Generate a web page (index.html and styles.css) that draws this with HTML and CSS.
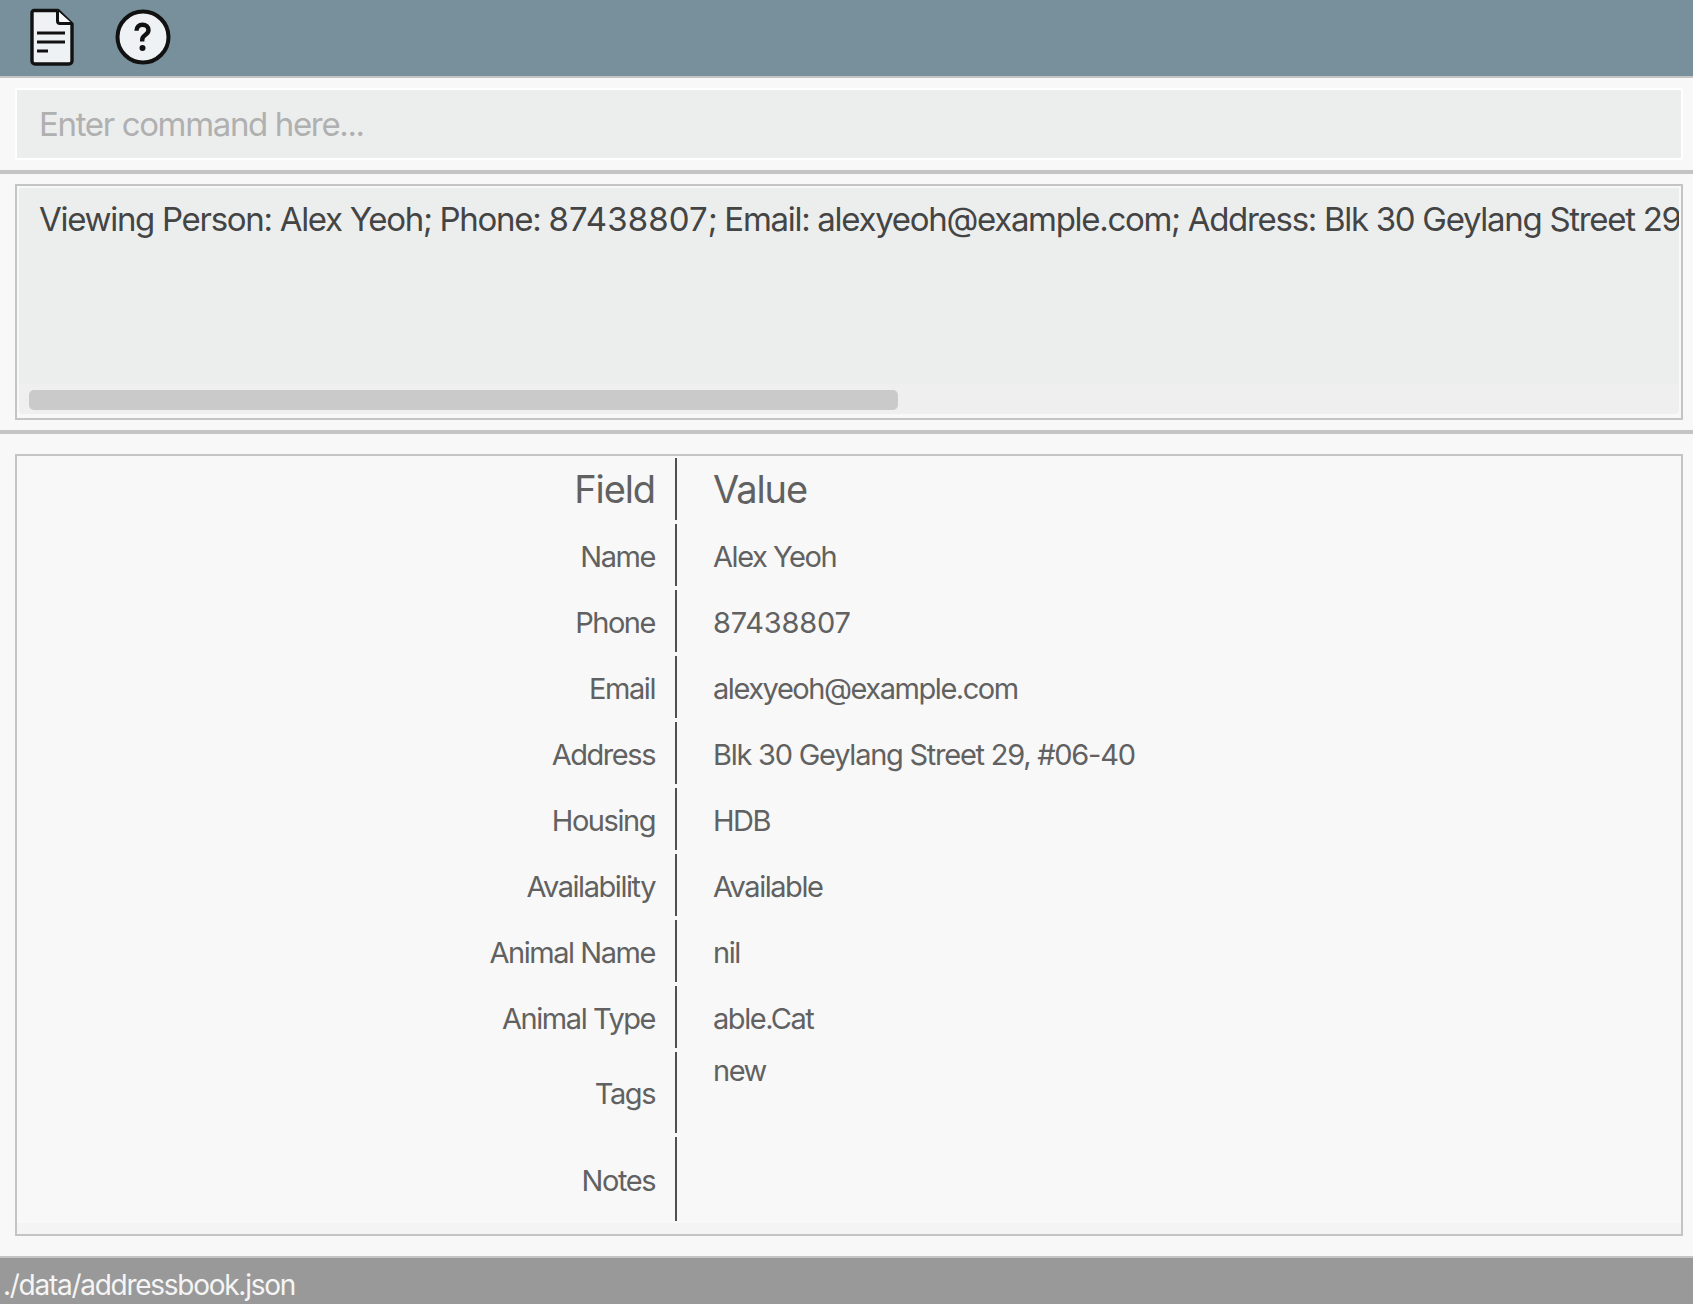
FILE: index.html
```html
<!DOCTYPE html>
<html lang="en">
<head>
<meta charset="utf-8">
<title>Address Book</title>
<link rel="stylesheet" href="styles.css">
</head>
<body>
<div class="app">
  <header class="toolbar">
    <svg class="icon-file" viewBox="0 0 44 58" width="44" height="58">
      <path d="M4 2.500H28L42 16V53a3 3 0 0 1-3 3H5a3 3 0 0 1-3-3V4.500a2 2 0 0 1 2-2Z" fill="#eff2f5" stroke="#111" stroke-width="3.400" stroke-linejoin="round"/>
      <path d="M27.500 2.500V13a2.500 2.500 0 0 0 2.500 2.500H42" fill="#fafbfc" stroke="#111" stroke-width="3"/>
      <path d="M7 25H35M7 34H35M7 43H18" fill="none" stroke="#111" stroke-width="2.800"/>
    </svg>
    <svg class="icon-help" viewBox="0 0 56 56" width="56" height="56">
      <circle cx="28" cy="28" r="25.500" fill="#eff2f5" stroke="#111" stroke-width="4"/>
      <path d="M21.500 21.800c0-4 2.500-6 6-6 3.500 0 6 2.200 6 5.200 0 2.600-1.500 3.800-3.300 5-2 1.400-3 2.500-3 5v1.500" fill="none" stroke="#111" stroke-width="4.400"/>
      <circle cx="27.500" cy="39" r="3" fill="#111"/>
    </svg>
  </header>

  <section class="command-pane">
    <div class="command-box">Enter command here...</div>
  </section>

  <section class="result-pane">
    <div class="result-box">
      <div class="result-text">Viewing Person: Alex Yeoh; Phone: <span class="digits">87438807</span>; Email: alexyeoh@example.com; Address: Blk 30 Geylang Street 29, #06-40; Housing: HDB; Availability: Available; Animal Name: nil</div>
      <div class="scroll-track"><div class="scroll-thumb"></div></div>
    </div>
  </section>

  <main class="detail-pane">
    <div class="detail-box">
      <div class="detail-rows">
        <div class="row row-head"><div class="field">Field</div><div class="value">Value</div></div>
        <div class="row"><div class="field">Name</div><div class="value">Alex Yeoh</div></div>
        <div class="row"><div class="field">Phone</div><div class="value value-digits">87438807</div></div>
        <div class="row"><div class="field">Email</div><div class="value">alexyeoh@example.com</div></div>
        <div class="row"><div class="field">Address</div><div class="value value-address">Blk 30 Geylang Street 29, #06-40</div></div>
        <div class="row"><div class="field">Housing</div><div class="value">HDB</div></div>
        <div class="row"><div class="field">Availability</div><div class="value">Available</div></div>
        <div class="row"><div class="field">Animal Name</div><div class="value">nil</div></div>
        <div class="row"><div class="field">Animal Type</div><div class="value">able.Cat</div></div>
        <div class="row row-tags"><div class="field">Tags</div><div class="value value-top">new</div></div>
        <div class="row row-notes"><div class="field">Notes</div><div class="value"></div></div>
      </div>
      <div class="detail-foot"></div>
    </div>
  </main>

  <footer class="status">./data/addressbook.json</footer>
</div>
</body>
</html>
```

FILE: styles.css
```css
* { box-sizing: border-box; }
html, body { margin: 0; height: 100%; }
body {
  background: #f8f8f8;
  font-family: Inter, "Liberation Sans", sans-serif;
  overflow: hidden;
}
.app { display: flex; flex-direction: column; height: 1304px; }

.toolbar {
  height: 78px;
  background: #78909c;
  border-bottom: 2px solid #c4c4c4;
  display: flex;
  align-items: flex-start;
  gap: 41px;
  padding: 8px 0 0 30px;
}
.icon-help { margin-top: 1px; }

.command-pane {
  height: 96px;
  padding: 10px 10px 0 15px;
  border-bottom: 4px solid #c4c4c4;
}
.command-box {
  height: 72px;
  background: #eceeee;
  border: 2px solid #fff;
  padding: 0 0 0 22px;
  display: flex;
  align-items: center;
  color: #b0b0b0;
  font-size: 33px;
  letter-spacing: -1.35px;
}

.result-pane {
  height: 260px;
  padding: 10px 10px 0 15px;
  border-bottom: 4px solid #c4c4c4;
}
.result-box {
  height: 236px;
  border: 2px solid #c4c4c4;
  padding: 2px 2px 4px;
  display: flex;
  flex-direction: column;
}
.result-text {
  flex: 1;
  background: #eceeee;
  padding: 11px 0 0 20px;
  color: #444;
  font-size: 33px;
  letter-spacing: -1.3px;
  white-space: nowrap;
  overflow: hidden;
}
.digits { letter-spacing: 0.1px; }
.scroll-track {
  height: 30px;
  background: #efefef;
  padding: 6px 0 4px 10px;
  border-radius: 0 0 4px 4px;
}
.scroll-thumb {
  width: 869px;
  height: 20px;
  background: #cacaca;
  border-radius: 5px;
}

.detail-pane {
  height: 822px;
  padding: 20px 10px 0 15px;
}
.detail-box {
  height: 782px;
  border: 2px solid #c4c4c4;
  display: flex;
  flex-direction: column;
}
.detail-rows {
  flex: 1;
  display: flex;
  flex-direction: column;
  gap: 4px;
  padding-top: 2px;
}
.detail-foot { height: 11px; background: #f4f4f4; }
.row { display: flex; height: 62px; color: #616161; font-size: 29px; letter-spacing: -1.45px; }
.row-head { font-size: 38px; letter-spacing: -1.1px; }
.row-tags { height: 81px; }
.row-notes { height: 84px; }
.field {
  width: 639px;
  flex: none;
  display: flex;
  align-items: center;
  justify-content: flex-end;
  padding: 2px 1px 0 0;
}
.value {
  flex: 1;
  border-left: 2px solid #505050;
  margin-left: 19px;
  padding: 2px 0 0 36px;
  display: flex;
  align-items: center;
}
.row-head .field, .row-head .value { padding-top: 0; }
.value-top { align-items: flex-start; padding-top: 1px; }
.value-digits { letter-spacing: -0.2px; }
.value-address { letter-spacing: -1.25px; }

.status {
  flex: 1;
  background: #999;
  border-top: 2px solid #c4c4c4;
  color: #f5f5f5;
  font-size: 28px;
  letter-spacing: -1.27px;
  padding: 9px 0 0 3px;
  line-height: 36px;
}
```
